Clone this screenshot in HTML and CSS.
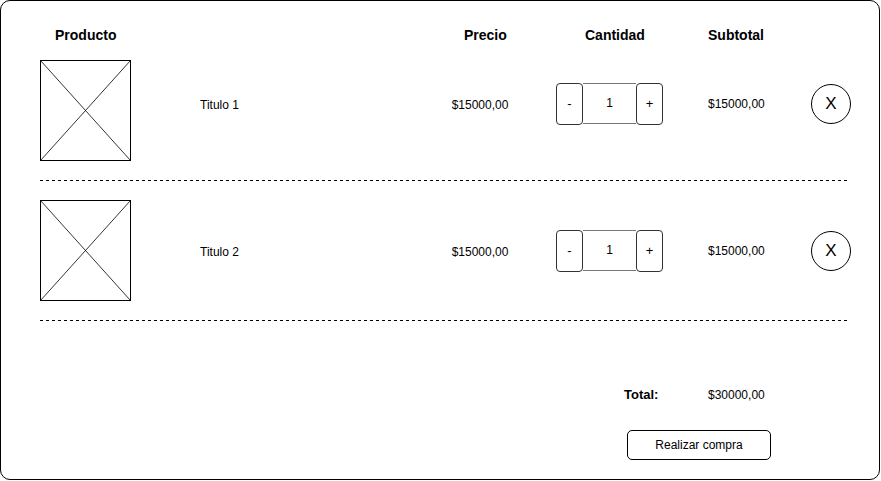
FILE: index.html
```html
<!DOCTYPE html>
<html lang="es">
<head>
<meta charset="utf-8">
<title>Carrito</title>
<link rel="stylesheet" href="styles.css">
</head>
<body>
<div class="frame">
  <div class="head">
    <div class="h h-prod">Producto</div>
    <div class="h h-price">Precio</div>
    <div class="h h-qty">Cantidad</div>
    <div class="h h-sub">Subtotal</div>
  </div>

  <div class="item item--first">
    <svg class="thumb" width="91" height="101" viewBox="0 0 91 101">
      <rect x="0.5" y="0.5" width="90" height="100" fill="#fff" stroke="#000"/>
      <line x1="0.5" y1="0.5" x2="90.5" y2="100.5" stroke="#000" stroke-width="0.8"/>
      <line x1="90.5" y1="0.5" x2="0.5" y2="100.5" stroke="#000" stroke-width="0.8"/>
    </svg>
    <div class="cell title">Titulo 1</div>
    <div class="cell price">$15000,00</div>
    <div class="cell qty">
      <div class="qty-btn">-</div>
      <div class="qty-val">1</div>
      <div class="qty-btn">+</div>
    </div>
    <div class="cell sub">$15000,00</div>
    <div class="cell remove">X</div>
  </div>

  <div class="divider"></div>

  <div class="item">
    <svg class="thumb" width="91" height="101" viewBox="0 0 91 101">
      <rect x="0.5" y="0.5" width="90" height="100" fill="#fff" stroke="#000"/>
      <line x1="0.5" y1="0.5" x2="90.5" y2="100.5" stroke="#000" stroke-width="0.8"/>
      <line x1="90.5" y1="0.5" x2="0.5" y2="100.5" stroke="#000" stroke-width="0.8"/>
    </svg>
    <div class="cell title">Titulo 2</div>
    <div class="cell price">$15000,00</div>
    <div class="cell qty">
      <div class="qty-btn">-</div>
      <div class="qty-val">1</div>
      <div class="qty-btn">+</div>
    </div>
    <div class="cell sub">$15000,00</div>
    <div class="cell remove">X</div>
  </div>

  <div class="divider"></div>

  <div class="summary">
    <div class="summary-label">Total:</div>
    <div class="summary-value">$30000,00</div>
  </div>

  <button class="buy">Realizar compra</button>
</div>
</body>
</html>
```

FILE: styles.css
```css
html, body {
  margin: 0;
  padding: 0;
  background: #fff;
}

body {
  font-family: "Liberation Sans", Arial, Helvetica, sans-serif;
  color: #000;
}

.frame {
  width: 880px;
  height: 480px;
  box-sizing: border-box;
  border: 1px solid #000;
  border-radius: 10px;
  padding: 26px 0 0 39px;
  background: #fff;
}

.head {
  display: flex;
  height: 16px;
  line-height: 16px;
  font-size: 14px;
  font-weight: bold;
}

.h-prod {
  width: 409px;
  padding-left: 15px;
}

.h-price {
  width: 121px;
}

.h-qty {
  width: 123px;
}

.item {
  display: grid;
  grid-template-columns: 160px 240px 80px 188px 82px 62px;
  align-items: center;
  height: 101px;
  margin-top: 17px;
  font-size: 12px;
  line-height: 16px;
}

.item--first .cell {
  margin-bottom: 14px;
}

.item + .divider + .item {
  margin-top: 19px;
}

.thumb {
  display: block;
  align-self: start;
}

.title,
.price {
  padding-top: 3px;
}

.price {
  justify-self: center;
}

.qty {
  display: flex;
  width: 107px;
  height: 42px;
  margin-left: 36px;
}

.qty-btn {
  width: 27px;
  box-sizing: border-box;
  border: 1px solid #333;
  border-radius: 4px;
  display: flex;
  align-items: center;
  justify-content: center;
  font-size: 13px;
}

.qty-val {
  flex: 1;
  box-sizing: border-box;
  border-top: 1px solid #777;
  border-bottom: 1px solid #777;
  display: flex;
  align-items: center;
  justify-content: center;
  margin-bottom: 1px;
}

.remove {
  width: 40px;
  height: 40px;
  box-sizing: border-box;
  margin-left: 21px;
  border: 1px solid #000;
  border-radius: 50%;
  display: flex;
  align-items: center;
  justify-content: center;
  font-size: 17px;
}

.divider {
  width: 808px;
  height: 1px;
  margin-top: 19px;
  background: repeating-linear-gradient(to right, #000 0 3px, transparent 3px 6px);
}

.summary {
  display: flex;
  margin: 66px 0 0 584px;
  line-height: 16px;
}

.summary-label {
  width: 84px;
  font-size: 13px;
  font-weight: bold;
}

.summary-value {
  font-size: 12px;
}

.buy {
  display: block;
  width: 144px;
  height: 30px;
  margin: 27px 0 0 587px;
  box-sizing: border-box;
  border: 1px solid #000;
  border-radius: 5px;
  background: #fff;
  font-family: "Liberation Sans", Arial, Helvetica, sans-serif;
  font-size: 12px;
  color: #000;
  padding: 0;
}
```
